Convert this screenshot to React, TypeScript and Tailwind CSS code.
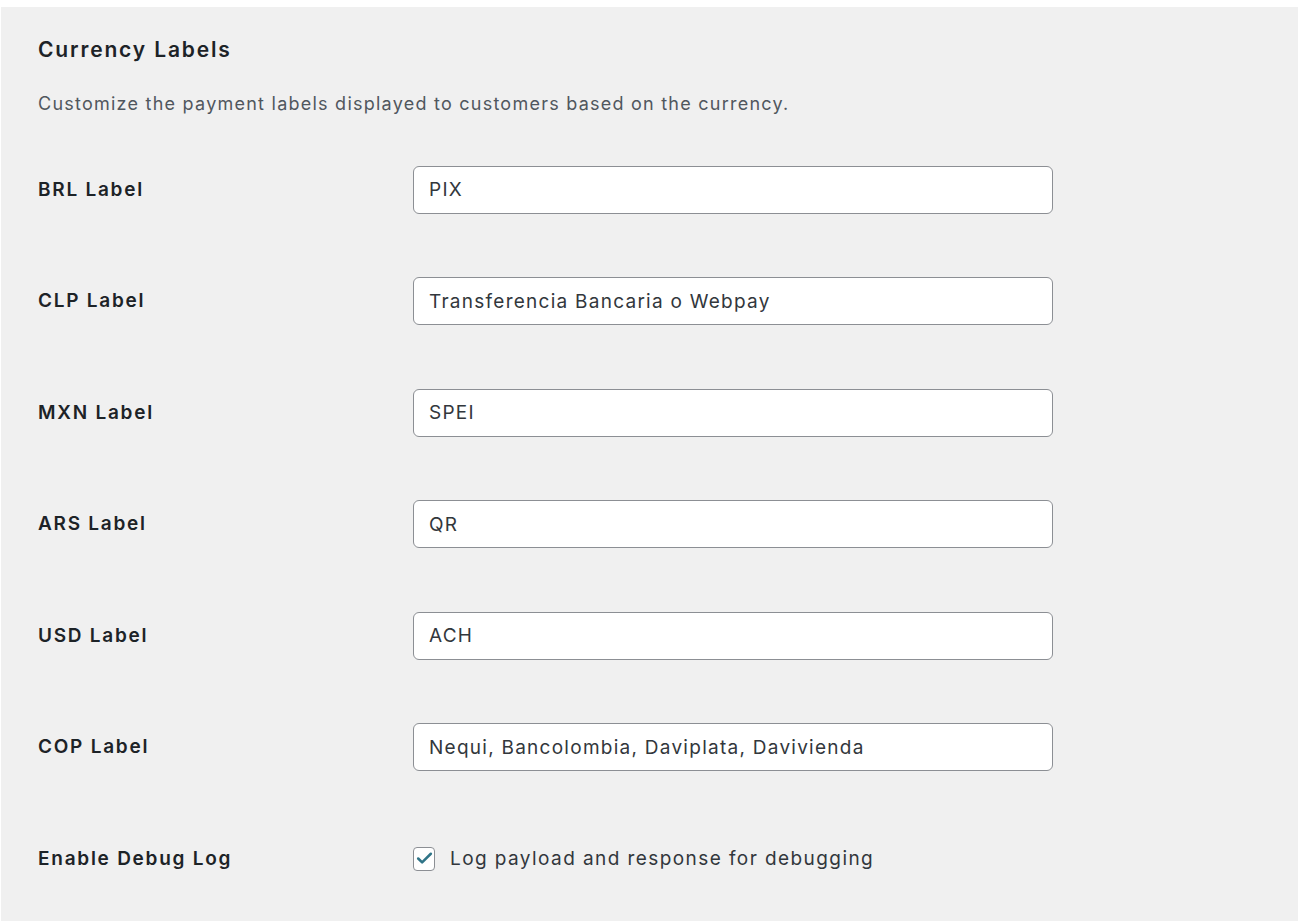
import { Check } from "lucide-react";

const rows = [
  { label: "BRL Label", value: "PIX" },
  { label: "CLP Label", value: "Transferencia Bancaria o Webpay" },
  { label: "MXN Label", value: "SPEI" },
  { label: "ARS Label", value: "QR" },
  { label: "USD Label", value: "ACH" },
  { label: "COP Label", value: "Nequi, Bancolombia, Daviplata, Davivienda" },
];

export default function App() {
  return (
    <div className="w-[1298px] h-[924px] bg-white pt-[7px] pl-[1px] font-['Inter',sans-serif]">
      <div className="h-[914px] bg-[#f0f0f0] pl-[37px] pt-[29px] flex flex-col overflow-hidden">
        <h2 className="text-[21px] leading-[28px] font-semibold tracking-[1.85px] text-[#1d2327]">Currency Labels</h2>
        <p className="mt-[27px] text-[18px] leading-[26px] tracking-[1.24px] text-[#50575e]">
          Customize the payment labels displayed to customers based on the currency.
        </p>

        <div className="mt-[17px] flex flex-col">
          {rows.map((row) => (
            <div key={row.label} className="h-[111.5px] flex items-center">
              <label className="w-[375px] text-[19px] font-semibold tracking-[1.75px] text-[#1d2327]">{row.label}</label>
              <input
                type="text"
                defaultValue={row.value}
                className="w-[640px] h-[48px] px-[15px] bg-white border border-[#8c8f94] rounded-[6px] text-[19px] tracking-[1.26px] text-[#32373c] outline-none"
              />
            </div>
          ))}

          <div className="h-[111.5px] flex items-center">
            <span className="w-[375px] text-[19px] font-semibold tracking-[1.75px] text-[#1d2327]">Enable Debug Log</span>
            <label className="flex items-center gap-[15px]">
              <span className="w-[22px] h-[24px] rounded-[4px] border border-[#8c8f94] bg-white flex items-center justify-center">
                <Check size={19} strokeWidth={3.2} className="text-[#2f7487]" />
              </span>
              <span className="text-[19px] tracking-[1.42px] text-[#32373c]">Log payload and response for debugging</span>
            </label>
          </div>
        </div>
      </div>
    </div>
  );
}
